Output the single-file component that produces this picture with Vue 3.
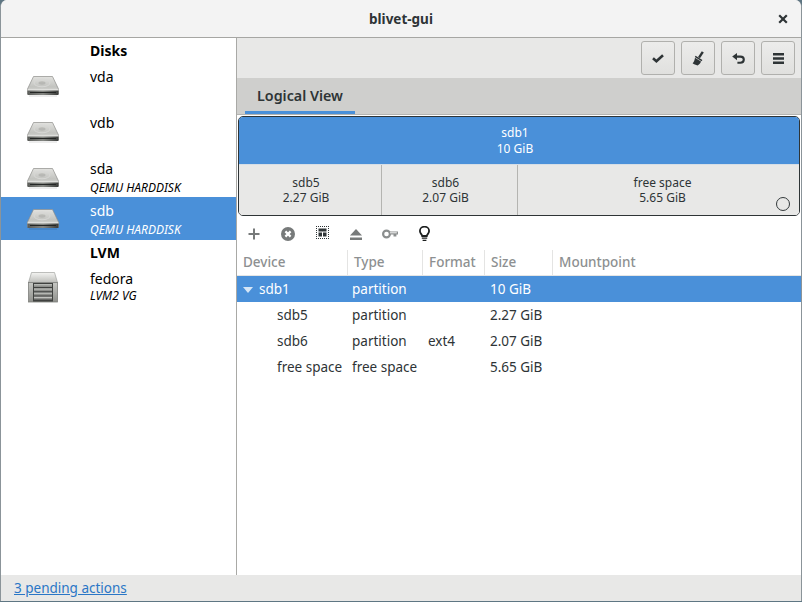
<template>
  <div class="window">
    <header class="titlebar">
      <span class="title">blivet-gui</span>
      <svg class="close" width="10" height="10" viewBox="0 0 10 10"><path d="M1.2 1.2 8.8 8.8M8.8 1.2 1.2 8.8" fill="none" stroke="#2e3436" stroke-width="2.2"/></svg>
    </header>

    <div class="body">
      <aside class="sidebar">
        <template v-for="group in groups" :key="group.name">
          <div class="group-title">{{ group.name }}</div>
          <div v-for="dev in group.devices" :key="dev.name" class="dev" :class="[dev.cls, { selected: dev.selected }]">
            <div class="dev-icon">
              <svg v-if="group.name === 'Disks'" width="32" height="21" viewBox="0 0 32 21">
                <use href="#hdd" />
              </svg>
              <svg v-else width="30" height="31" viewBox="0 0 30 31">
                <use href="#vg" />
              </svg>
            </div>
            <div class="dev-text">
              <div class="dev-name">{{ dev.name }}</div>
              <div v-if="dev.sub" class="dev-sub">{{ dev.sub }}</div>
            </div>
          </div>
        </template>
      </aside>

      <main class="content">
        <div class="toolbar">
          <button class="tool">
            <svg width="12" height="9" viewBox="0 0 12 9"><path d="M1 4.2 4.4 7.2 11 1.2" fill="none" stroke="#2e3436" stroke-width="2.6"/></svg>
          </button>
          <button class="tool">
            <svg width="12" height="15" viewBox="0 0 12 15"><path d="M10.8.8 7 6.6" stroke="#2e3436" stroke-width="2.4" fill="none"/><path d="M3.6 4.8 10.4 9 9.6 10.2 2.8 6Z" fill="#2e3436"/><path d="M3 6.8 9 10.6C8.2 12.6 7 14 5.6 14.4 3.8 14 1.8 13.2.6 12.2 2 11.4 2.6 9.2 3 6.8Z" fill="#2e3436"/></svg>
          </button>
          <button class="tool">
            <svg width="13" height="11" viewBox="0 0 13 11"><path d="M5 0 .2 3.6 5 7.2Z" fill="#2e3436"/><path d="M3.5 3.6H8.4C10.6 3.6 11.8 5 11.8 6.6S10.6 9.8 8.4 9.8H5.4" fill="none" stroke="#2e3436" stroke-width="2.1"/></svg>
          </button>
          <button class="tool">
            <svg width="11" height="11" viewBox="0 0 11 11"><path d="M0 0h11v2.400H0zM0 4.300h11v2.400H0zM0 8.600h11V11H0z" fill="#2e3436"/></svg>
          </button>
        </div>

        <div class="tabbar">
          <div class="tab">Logical View</div>
        </div>

        <div class="pview">
          <div class="p-top">
            <div>sdb1</div>
            <div>10 GiB</div>
          </div>
          <div class="p-bottom">
            <div v-for="p in parts" :key="p.name" class="part" :class="p.cls" :style="{ width: p.width + 'px' }">
              <div>{{ p.name }}</div>
              <div>{{ p.size }}</div>
            </div>
            <span class="radio"></span>
          </div>
        </div>

        <div class="actions">
          <span class="act">
            <svg width="12" height="12" viewBox="0 0 12 12"><path d="M6 .5v11M.5 6h11" stroke="#777a7a" stroke-width="2" fill="none"/></svg>
          </span>
          <span class="act">
            <svg width="14" height="14" viewBox="0 0 14 14"><circle cx="7" cy="7" r="7" fill="#777a7a"/><path d="M4.400 4.400 9.600 9.600M9.600 4.400 4.400 9.600" stroke="#fff" stroke-width="2.200"/></svg>
          </span>
          <span class="act act-up">
            <svg width="13" height="13" viewBox="0 0 13 13"><path d="M0 .5h13M0 12.500h13M.5 0v13M12.500 0v13" fill="none" stroke="#2e3436" stroke-dasharray="1 1"/><path d="M2.500 2.500h8v3h-8zM2.500 6.500H6v4H2.500zM7 6.500h3.500v4H7z" fill="#2e3436"/></svg>
          </span>
          <span class="act">
            <svg width="12" height="11" viewBox="0 0 12 11"><path d="M6 0 12 6.500H0Z" fill="#777a7a"/><path d="M0 8.500h12V11H0z" fill="#777a7a"/></svg>
          </span>
          <span class="act">
            <svg width="16" height="10" viewBox="0 0 16 10"><circle cx="4.500" cy="5" r="3.400" fill="none" stroke="#8b8e8e" stroke-width="2.200"/><path d="M7.500 2.400H16V5.400H14.400V7.400H11.500V5.400H7.500Z" fill="#8b8e8e"/><path d="M8 3.800H14.800" stroke="#fff" stroke-width=".9"/></svg>
          </span>
          <span class="act">
            <svg width="11" height="16" viewBox="0 0 11 16"><path d="M3.200 10C3 8.400.9 7.400.9 4.900A4.600 4.200 0 0 1 10.100 4.900C10.100 7.400 8 8.400 7.800 10Z" fill="none" stroke="#1c1f1f" stroke-width="1.800"/><path d="M2.800 11.400h5.400v1.300H2.800zM3.600 13.800h3.800v1.200H3.600z" fill="#1c1f1f"/></svg>
          </span>
        </div>

        <div class="tree">
          <div class="tree-head">
            <div v-for="h in heads" :key="h.name" class="th" :style="{ width: h.width + 'px' }">{{ h.name }}</div>
          </div>
          <div v-for="r in rows" :key="r.device" class="tr" :class="{ selected: r.selected }">
            <div class="td td-dev" :class="{ child: !r.selected }">
              <span v-if="r.selected" class="arrow"></span>{{ r.device }}
            </div>
            <div class="td td-type">{{ r.type }}</div>
            <div class="td td-fmt">{{ r.format }}</div>
            <div class="td">{{ r.size }}</div>
          </div>
        </div>
      </main>
    </div>

    <footer class="statusbar">
      <a class="pending" href="#">3 pending actions</a>
    </footer>

    <svg class="defs" width="0" height="0">
      <defs>
        <linearGradient id="hddTop" x1="0" y1="0" x2="0" y2="1">
          <stop offset="0" stop-color="#e2e2df" />
          <stop offset=".6" stop-color="#c2c3bf" />
          <stop offset="1" stop-color="#e8e8e6" />
        </linearGradient>
        <linearGradient id="hddEdge" x1="0" y1="0" x2="1" y2="0">
          <stop offset="0" stop-color="#5a5c59" />
          <stop offset=".5" stop-color="#858783" />
          <stop offset="1" stop-color="#3a3c3a" />
        </linearGradient>
        <linearGradient id="vgFront" x1="0" y1="0" x2="0" y2="1">
          <stop offset="0" stop-color="#c6c7c3" />
          <stop offset="1" stop-color="#8f908c" />
        </linearGradient>
        <linearGradient id="vgTop" x1="0" y1="0" x2="0" y2="1">
          <stop offset="0" stop-color="#f4f4f2" />
          <stop offset="1" stop-color="#bcbdb9" />
        </linearGradient>
        <symbol id="hdd" viewBox="0 0 32 21">
          <path d="M6.500.5H25.500L31.500 13V18H.5V13Z" fill="url(#hddTop)" stroke="#8c8d8a" stroke-width=".7"/>
          <ellipse cx="15" cy="7" rx="8" ry="3.800" fill="none" stroke="#d8d8d6" stroke-width="1"/>
          <ellipse cx="15" cy="7" rx="3.500" ry="1.700" fill="#a5a6a3" opacity=".55"/>
          <path d="M.5 13.500H31.500V14.500H.5Z" fill="#eeeeec"/>
          <path d="M.5 14.500H31.500V18.500Q31.500 19 30.500 19H1.500Q.5 19 .5 18.500Z" fill="url(#hddEdge)"/>
          <path d="M3 16.500H29" stroke="#232524" stroke-width="1.200"/>
          <path d="M2 20H30" stroke="#000" stroke-opacity=".14" stroke-width="1.200"/>
        </symbol>
        <symbol id="vg" viewBox="0 0 30 31">
          <path d="M3.500.5H26.500L29.500 10.500H.5Z" fill="url(#vgTop)" stroke="#a2a3a0" stroke-width=".7"/>
          <rect x=".5" y="10.500" width="29" height="19.500" fill="url(#vgFront)" stroke="#7e7f7c" stroke-width=".8"/>
          <rect x="5" y="11" width="20" height="18.500" fill="#3f413f"/>
          <path d="M6 12h18v3H6zM6 16.200h18v3H6zM6 20.400h18v3H6zM6 24.600h18v3H6z" fill="#8d8e8b"/>
          <path d="M6 12.800h18M6 17h18M6 21.200h18M6 25.400h18" stroke="#d8d9d6" stroke-width=".8"/>
        </symbol>
      </defs>
    </svg>
  </div>
</template>

<script setup>
const groups = [
  {
    name: 'Disks',
    devices: [
      { name: 'vda', cls: 'tall' },
      { name: 'vdb', cls: 'tall' },
      { name: 'sda', sub: 'QEMU HARDDISK', cls: 'short' },
      { name: 'sdb', sub: 'QEMU HARDDISK', selected: true },
    ],
  },
  {
    name: 'LVM',
    devices: [{ name: 'fedora', sub: 'LVM2 VG', cls: 'vg' }],
  },
]

const parts = [
  { name: 'sdb5', size: '2.27 GiB', width: 143 },
  { name: 'sdb6', size: '2.07 GiB', width: 136 },
  { name: 'free space', size: '5.65 GiB', width: 281, cls: 'last' },
]

const heads = [
  { name: 'Device', width: 111 },
  { name: 'Type', width: 75 },
  { name: 'Format', width: 62 },
  { name: 'Size', width: 68 },
  { name: 'Mountpoint', width: 200 },
]

const rows = [
  { device: 'sdb1', type: 'partition', format: '', size: '10 GiB', selected: true },
  { device: 'sdb5', type: 'partition', format: '', size: '2.27 GiB' },
  { device: 'sdb6', type: 'partition', format: 'ext4', size: '2.07 GiB' },
  { device: 'free space', type: 'free space', format: '', size: '5.65 GiB' },
]
</script>

<style>
html, body { margin: 0; background: #5e7683; overflow: hidden; }
</style>

<style scoped>
.window {
  width: 802px; height: 601px;
  border-radius: 7px 7px 0 0;
  overflow: hidden;
  display: flex; flex-direction: column;
  background: #fff;
  font-family: "Noto Sans", sans-serif;
  font-size: 13.5px;
  color: #2e3436;
  box-sizing: border-box;
  border-left: 1px solid #8b9499;
  border-right: 1px solid #8b9499;
}
.defs { position: absolute; }

.titlebar {
  height: 37px; flex-shrink: 0;
  background: #f3f3f3;
  border-bottom: 1px solid #a6a6a3;
  display: flex; align-items: center; justify-content: center;
  position: relative;
}
.title { font-weight: 700; font-size: 13.5px; color: #2e3436; }
.close { position: absolute; right: 13px; top: 14px; }

.body { flex: 1; display: flex; min-height: 0; }

.sidebar {
  width: 235px; flex-shrink: 0;
  border-right: 1px solid #a9a9a6;
  background: #fff;
  color: #000;
}
.group-title {
  height: 25px; line-height: 26px;
  padding-left: 89px;
  font-weight: 700; font-size: 14px;
}
.dev { height: 43px; display: flex; }
.dev.tall { height: 46px; }
.dev.short { height: 42px; }
.dev.vg { height: 46px; }
.dev-icon { width: 89px; flex-shrink: 0; padding: 13px 0 0 26px; box-sizing: border-box; }
.dev.selected .dev-icon { padding-top: 12px; }
.dev.vg .dev-icon { padding: 7px 0 0 27px; }
.dev-icon svg { display: block; }
.dev-text { padding-top: 4px; }
.dev-name { font-size: 14px; line-height: 20px; }
.dev-sub { font-size: 12px; font-style: italic; line-height: 16px; margin-top: 1px; }
.dev.vg .dev-sub { line-height: 14px; margin-top: 0; }
.dev.selected { background: #4a90d9; color: #fff; }

.content { flex: 1; min-width: 0; display: flex; flex-direction: column; background: #fff; }

.toolbar {
  height: 40px; flex-shrink: 0;
  background: #e8e8e7;
  display: flex; align-items: flex-start; justify-content: flex-end; gap: 6px;
  padding: 3px 6px 0 0;
  box-sizing: border-box;
}
.tool {
  width: 34px; height: 34px;
  border: 1px solid #b0b0ad;
  border-radius: 3px;
  background: linear-gradient(#ececeb, #e0e0de);
  display: flex; align-items: center; justify-content: center;
  padding: 0;
}

.tabbar {
  height: 37px; flex-shrink: 0;
  background: #cfcfcd;
  border-bottom: 1px solid #b4b4b1;
  padding-left: 8px;
  box-sizing: border-box;
}
.tab {
  width: 110px; height: 36px; line-height: 35px;
  text-align: center;
  box-sizing: border-box;
  border-bottom: 3px solid #4a90d9;
  font-weight: 600; font-size: 14.3px;
  color: #2e3436;
}

.pview {
  margin: 1px 1px 0 1px;
  height: 100px;
  border: 1px solid #2e3436;
  border-radius: 5px;
  overflow: hidden;
  box-sizing: border-box;
  font-size: 12px;
  line-height: 15.5px;
  text-align: center;
  flex-shrink: 0;
}
.p-top {
  height: 48px; background: #4a90d9; color: #fff;
  display: flex; flex-direction: column; justify-content: center;
  border-bottom: 1px solid #d6dee6;
  padding: 0 8px 0 0;
  line-height: 16px;
  box-sizing: border-box;
}
.p-bottom { height: 50px; display: flex; background: #e8e8e7; position: relative; color: #2e3436; }
.part {
  height: 100%;
  display: flex; flex-direction: column; justify-content: center;
  border-right: 1px solid #b4b4b1;
  box-sizing: border-box;
  padding: 0 8px 0 0;
}
.part.last { border-right: 0; padding: 0 0 0 8px; }
.radio {
  position: absolute; right: 9px; bottom: 4px;
  width: 12px; height: 12px;
  border: 1px solid #33393b;
  border-radius: 50%;
}

.actions {
  height: 34px; flex-shrink: 0;
  display: flex; align-items: center;
  padding-top: 2px;
  box-sizing: border-box;
}
.act { width: 34px; height: 24px; display: flex; align-items: center; justify-content: center; }
.act-up { padding-bottom: 3px; box-sizing: border-box; }

.tree { flex: 1; font-size: 13.5px; color: #2e3436; }
.tree-head { height: 26px; display: flex; border-bottom: 1px solid #e6e6e5; box-sizing: border-box; }
.th {
  padding-left: 6px; box-sizing: border-box;
  border-right: 1px solid #e4e4e3;
  color: #8d9091; font-weight: 500;
  font-size: 13.5px; line-height: 25px;
}
.th:last-child { border-right: 0; }
.tr { height: 26px; display: flex; line-height: 26px; }
.tr.selected { background: #4a90d9; color: #fff; }
.td { box-sizing: border-box; padding-left: 5px; white-space: nowrap; }
.td-dev { width: 111px; padding-left: 22px; position: relative; }
.td-dev.child { padding-left: 40px; }
.td-type { width: 75px; padding-left: 4px; }
.td-fmt { width: 62px; }
.arrow {
  position: absolute; left: 6px; top: 11px;
  width: 0; height: 0;
  border-left: 5px solid transparent;
  border-right: 5px solid transparent;
  border-top: 6px solid #d6e6f6;
}

.statusbar {
  height: 26px; flex-shrink: 0;
  background: #e8e8e7;
  padding-left: 13px;
  line-height: 26px;
}
.pending { color: #2a76c6; font-size: 13.5px; text-decoration: underline; }
</style>
